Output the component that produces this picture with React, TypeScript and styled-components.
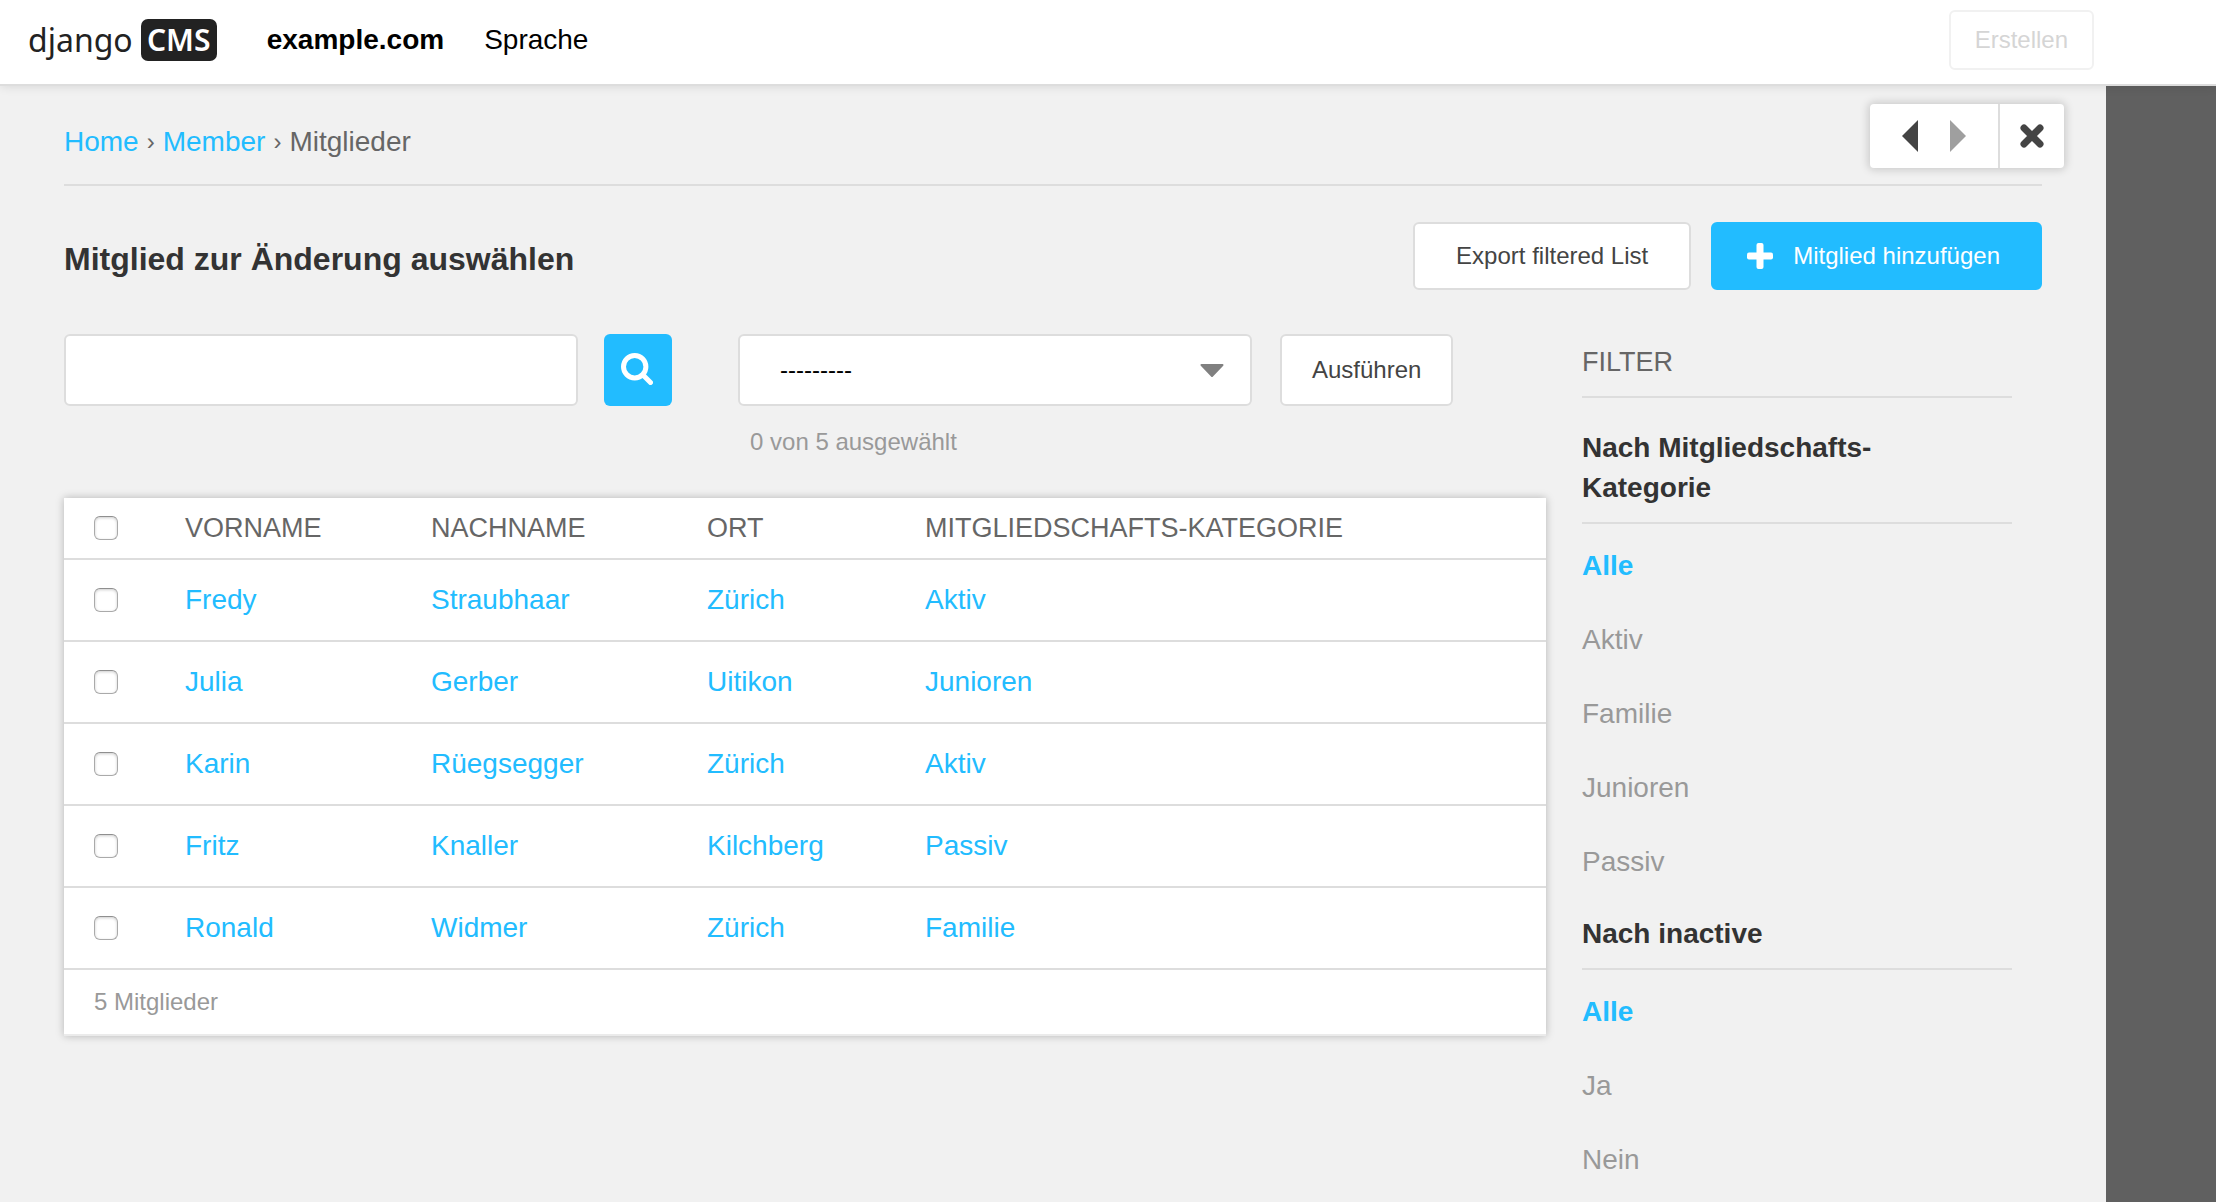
import React, { useState } from "react";
import styled, { createGlobalStyle } from "styled-components";

const color = {
  blue: "#22bcff",
  ink: "#333",
  text: "#666",
  muted: "#999",
  line: "#ddd",
  page: "#f1f1f1",
};

const GlobalStyle = createGlobalStyle`
  *, *::before, *::after { box-sizing: border-box; }
  body {
    margin: 0;
    background: ${color.page};
    color: ${color.text};
    font: 28px/40px "Liberation Sans", Arial, sans-serif;
  }
  button, input, select { font: inherit; margin: 0; }
  a { color: ${color.blue}; text-decoration: none; }
`;

const Page = styled.div`
  display: flex;
  flex-direction: column;
  min-height: 100vh;
`;

const Toolbar = styled.header`
  position: relative;
  z-index: 1;
  display: flex;
  align-items: center;
  height: 86px;
  padding: 0 122px 4px 28px;
  background: #fff;
  border-bottom: 2px solid ${color.line};
  box-shadow: 0 0 10px rgba(0, 0, 0, 0.12);
`;

const Logo = styled.a`
  display: flex;
  align-items: center;
  gap: 8px;
  color: #222;
  font: 32px/42px "Noto Sans", sans-serif;
`;

const LogoBadge = styled.span`
  width: 76px;
  border-radius: 7px;
  background: #222;
  color: #fff;
  font-size: 30px;
  font-weight: 600;
  text-align: center;
`;

const Menu = styled.nav`
  display: flex;
  flex: 1;
  gap: 40px;
  margin-left: 50px;
`;

const MenuLink = styled.a<{ $strong?: boolean }>`
  color: #000;
  font-weight: ${(p) => (p.$strong ? 700 : 400)};
`;

const Button = styled.button<{ $primary?: boolean; $pad: string; $height: number }>`
  display: flex;
  align-items: center;
  justify-content: center;
  gap: 20px;
  height: ${(p) => p.$height}px;
  padding: ${(p) => p.$pad};
  border: 2px solid ${(p) => (p.$primary ? color.blue : color.line)};
  border-radius: 6px;
  background: ${(p) => (p.$primary ? color.blue : "#fff")};
  color: ${(p) => (p.$primary ? "#fff" : "#444")};
  font-size: 24px;
  line-height: 28px;
  white-space: nowrap;
  &:disabled { border-color: #f1f1f1; color: #d5d5d5; }
`;

const Workspace = styled.div`
  display: flex;
  flex: 1;
`;

const Panel = styled.div`
  position: relative;
  flex: 1;
  padding: 36px 64px 0;
`;

const Backdrop = styled.div`
  width: 110px;
  background: #606060;
`;

const PanelControls = styled.div`
  position: absolute;
  top: 18px;
  right: 42px;
  display: flex;
  height: 64px;
  border-radius: 4px;
  background: #fff;
  box-shadow: 0 0 8px 2px rgba(0, 0, 0, 0.16);
`;

const History = styled.div`
  display: flex;
  padding: 0 16px;
  border-right: 2px solid ${color.line};
`;

const IconButton = styled.button<{ $width: number }>`
  display: flex;
  align-items: center;
  justify-content: center;
  width: ${(p) => p.$width}px;
  padding: 0;
  border: 0;
  background: none;
  color: #444;
  &:disabled { color: #9f9f9f; }
`;

const Breadcrumbs = styled.nav`
  display: flex;
  gap: 8px;
  height: 64px;
  border-bottom: 2px solid ${color.line};
`;

const Separator = styled.span`
  font-size: 24px;
`;

const TitleRow = styled.div`
  display: flex;
  align-items: center;
  gap: 20px;
  margin-top: 36px;
`;

const Title = styled.h1`
  flex: 1;
  margin: 0;
  padding-top: 5px;
  color: ${color.ink};
  font-size: 32px;
  line-height: 40px;
`;

const Columns = styled.div`
  display: flex;
  gap: 36px;
  margin-top: 44px;
`;

const Main = styled.main`
  flex: 1;
`;

const Controls = styled.div`
  display: flex;
  align-items: flex-start;
`;

const SearchForm = styled.form`
  display: flex;
  gap: 26px;
  margin-right: 66px;
`;

const SearchInput = styled.input`
  width: 514px;
  height: 72px;
  padding: 0 20px;
  border: 2px solid ${color.line};
  border-radius: 6px;
  background: #fff;
`;

const SearchButton = styled.button`
  display: flex;
  align-items: center;
  justify-content: center;
  width: 68px;
  height: 72px;
  padding: 0 2px 2px 0;
  border: 0;
  border-radius: 6px;
  background: ${color.blue};
`;

const ActionForm = styled.form`
  display: grid;
  grid-template-columns: 514px auto;
  column-gap: 28px;
  row-gap: 16px;
`;

const SelectBox = styled.div`
  display: grid;
  align-items: center;
  > * { grid-area: 1 / 1; }
  > svg { justify-self: end; margin-right: 28px; pointer-events: none; }
`;

const Select = styled.select`
  width: 100%;
  height: 72px;
  padding: 0 40px;
  appearance: none;
  border: 2px solid ${color.line};
  border-radius: 6px;
  background: #fff;
  color: #000;
  font-size: 24px;
`;

const SelectionCount = styled.span`
  padding-left: 12px;
  color: ${color.muted};
  font-size: 24px;
`;

const Results = styled.section`
  margin-top: 36px;
  border-bottom: 2px solid #ebebeb;
  background: #fff;
  box-shadow: 0 0 8px rgba(0, 0, 0, 0.25);
`;

const Table = styled.table`
  width: 100%;
  table-layout: fixed;
  border-collapse: separate;
  border-spacing: 0;
  text-align: left;
  th, td { padding: 0; border-bottom: 2px solid ${color.line}; }
  th { height: 62px; font-weight: 400; font-size: 27px; text-transform: uppercase; }
  td { height: 82px; }
  th:first-child, td:first-child { padding-left: 30px; }
`;

const Col = styled.col<{ $width?: number }>`
  width: ${(p) => (p.$width ? `${p.$width}px` : "auto")};
`;

const Checkbox = styled.input`
  display: block;
  width: 24px;
  height: 24px;
  appearance: none;
  border: 1px solid #aaa;
  border-top-color: #8f8f8f;
  border-radius: 6px;
  background: #fff;
  box-shadow: inset 0 1px 3px rgba(0, 0, 0, 0.2);
  &:checked { background: ${color.blue}; }
`;

const Total = styled.p`
  margin: 0;
  padding: 12px 30px;
  color: ${color.muted};
  font-size: 24px;
`;

const Filters = styled.aside`
  width: 430px;
  margin-right: 30px;
  padding-top: 8px;
`;

const FilterHeading = styled.h2`
  margin: 0;
  padding-bottom: 14px;
  border-bottom: 2px solid ${color.line};
  font-weight: 400;
  font-size: 27px;
  text-transform: uppercase;
`;

const FilterTitle = styled.h3`
  margin: 0;
  padding: 0 80px 14px 0;
  border-bottom: 2px solid ${color.line};
  color: ${color.ink};
  font-size: 28px;
`;

const FilterGroup = styled.div`
  padding-top: 30px;
  & + & { padding-top: 16px; }
`;

const FilterList = styled.ul`
  display: grid;
  row-gap: 34px;
  margin: 0;
  padding: 22px 0 16px;
  list-style: none;
`;

const FilterLink = styled.a<{ $active: boolean }>`
  color: ${(p) => (p.$active ? color.blue : color.muted)};
  font-weight: ${(p) => (p.$active ? 700 : 400)};
`;

const members = [
  ["Fredy", "Straubhaar", "Zürich", "Aktiv"],
  ["Julia", "Gerber", "Uitikon", "Junioren"],
  ["Karin", "Rüegsegger", "Zürich", "Aktiv"],
  ["Fritz", "Knaller", "Kilchberg", "Passiv"],
  ["Ronald", "Widmer", "Zürich", "Familie"],
];

const filters = [
  { title: "Nach Mitgliedschafts-Kategorie", options: ["Alle", "Aktiv", "Familie", "Junioren", "Passiv"] },
  { title: "Nach inactive", options: ["Alle", "Ja", "Nein"] },
];

export default function App() {
  const [selected, setSelected] = useState<number[]>([]);
  const toggle = (i: number) =>
    setSelected((s) => (s.includes(i) ? s.filter((n) => n !== i) : [...s, i]));

  return (
    <Page>
      <GlobalStyle />
      <Toolbar>
        <Logo href="#">
          <span>django</span>
          <LogoBadge>CMS</LogoBadge>
        </Logo>
        <Menu>
          <MenuLink href="#" $strong>example.com</MenuLink>
          <MenuLink href="#">Sprache</MenuLink>
        </Menu>
        <Button $pad="0 24px" $height={60} disabled>Erstellen</Button>
      </Toolbar>
      <Workspace>
        <Panel>
          <PanelControls>
            <History>
              <IconButton $width={48} aria-label="Zurück">
                <svg width="16" height="32" viewBox="0 0 16 32"><path d="M16 0v32L0 16z" fill="currentColor" /></svg>
              </IconButton>
              <IconButton $width={48} aria-label="Vor" disabled>
                <svg width="16" height="32" viewBox="0 0 16 32"><path d="M0 0v32l16-16z" fill="currentColor" /></svg>
              </IconButton>
            </History>
            <IconButton $width={64} aria-label="Schliessen">
              <svg width="24" height="24" viewBox="0 0 24 24">
                <path d="M4 4l16 16M20 4L4 20" stroke="currentColor" strokeWidth="7" strokeLinecap="round" />
              </svg>
            </IconButton>
          </PanelControls>
          <Breadcrumbs>
            <a href="#">Home</a>
            <Separator>›</Separator>
            <a href="#">Member</a>
            <Separator>›</Separator>
            <span>Mitglieder</span>
          </Breadcrumbs>
          <TitleRow>
            <Title>Mitglied zur Änderung auswählen</Title>
            <Button $pad="0 41px" $height={68}>Export filtered List</Button>
            <Button $pad="0 40px 0 34px" $height={68} $primary>
              <svg width="26" height="26" viewBox="0 0 26 26" fill="currentColor">
                <rect x="9.500" width="7" height="26" rx="2" />
                <rect y="9.500" width="26" height="7" rx="2" />
              </svg>
              Mitglied hinzufügen
            </Button>
          </TitleRow>
          <Columns>
            <Main>
              <Controls>
                <SearchForm onSubmit={(e) => e.preventDefault()}>
                  <SearchInput type="text" aria-label="Suche" />
                  <SearchButton aria-label="Suchen">
                    <svg width="32" height="32" viewBox="0 0 32 32" fill="none" stroke="#fff" strokeLinecap="round">
                      <circle cx="13.7" cy="13.7" r="11.2" strokeWidth="5" />
                      <path d="M22 22l7.500 7.500" strokeWidth="5" />
                    </svg>
                  </SearchButton>
                </SearchForm>
                <ActionForm onSubmit={(e) => e.preventDefault()}>
                  <SelectBox>
                    <Select aria-label="Aktion">
                      <option>---------</option>
                    </Select>
                    <svg width="24" height="13" viewBox="0 0 24 13">
                      <path d="M1.500 1h21L12 12z" fill="#808080" stroke="#808080" strokeWidth="2" strokeLinejoin="round" />
                    </svg>
                  </SelectBox>
                  <Button $pad="0 30px" $height={72}>Ausführen</Button>
                  <SelectionCount>{selected.length} von 5 ausgewählt</SelectionCount>
                </ActionForm>
              </Controls>
              <Results>
                <Table>
                  <colgroup>
                    <Col $width={121} />
                    <Col $width={246} />
                    <Col $width={276} />
                    <Col $width={218} />
                    <Col />
                  </colgroup>
                  <thead>
                    <tr>
                      <th>
                        <Checkbox
                          type="checkbox"
                          aria-label="Alle auswählen"
                          checked={selected.length === members.length}
                          onChange={(e) => setSelected(e.target.checked ? members.map((_, i) => i) : [])}
                        />
                      </th>
                      <th>Vorname</th>
                      <th>Nachname</th>
                      <th>Ort</th>
                      <th>Mitgliedschafts-Kategorie</th>
                    </tr>
                  </thead>
                  <tbody>
                    {members.map((row, i) => (
                      <tr key={i}>
                        <td>
                          <Checkbox
                            type="checkbox"
                            aria-label={`${row[0]} ${row[1]}`}
                            checked={selected.includes(i)}
                            onChange={() => toggle(i)}
                          />
                        </td>
                        {row.map((cell, j) => (
                          <td key={j}><a href="#">{cell}</a></td>
                        ))}
                      </tr>
                    ))}
                  </tbody>
                </Table>
                <Total>5 Mitglieder</Total>
              </Results>
            </Main>
            <Filters>
              <FilterHeading>Filter</FilterHeading>
              {filters.map((group) => (
                <FilterGroup key={group.title}>
                  <FilterTitle>{group.title}</FilterTitle>
                  <FilterList>
                    {group.options.map((option, i) => (
                      <li key={option}>
                        <FilterLink href="#" $active={i === 0}>{option}</FilterLink>
                      </li>
                    ))}
                  </FilterList>
                </FilterGroup>
              ))}
            </Filters>
          </Columns>
        </Panel>
        <Backdrop />
      </Workspace>
    </Page>
  );
}
